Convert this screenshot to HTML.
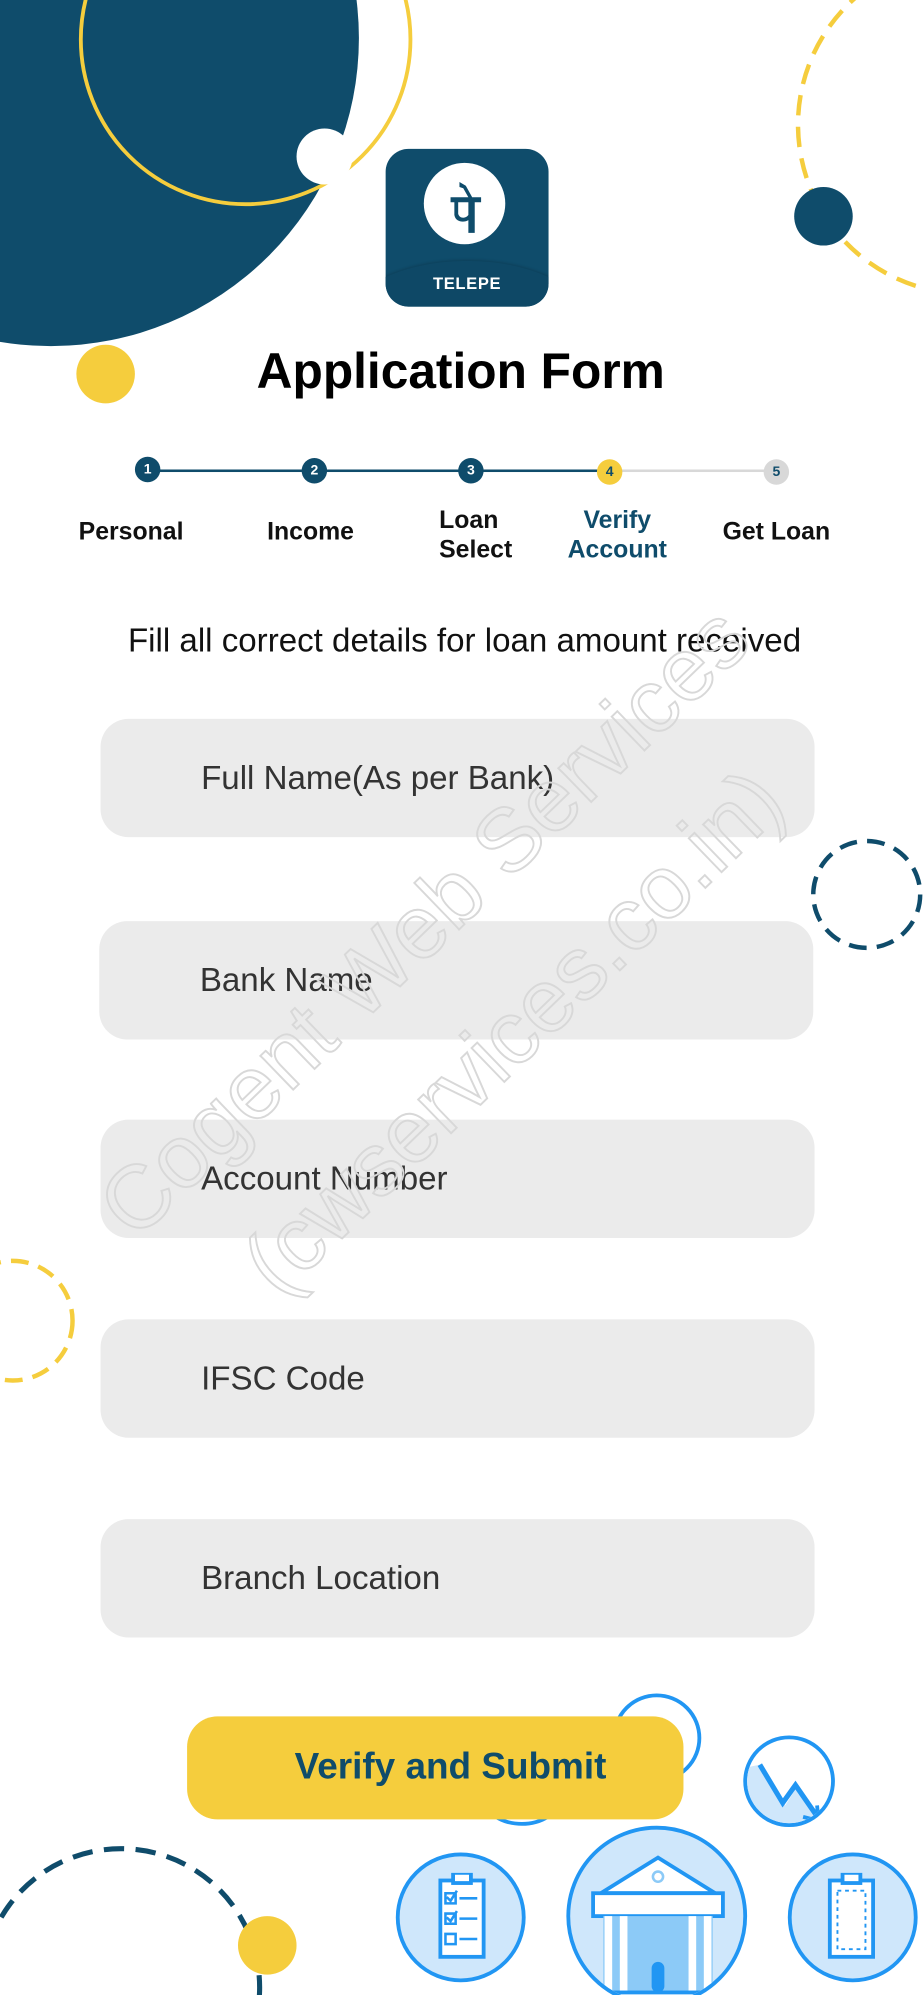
<!DOCTYPE html>
<html><head><meta charset="utf-8"><style>
html,body{margin:0;padding:0;background:#fff;overflow:hidden}
body{width:924px;height:1995px;position:relative}
#w{position:absolute;left:0;top:0;width:726px;height:1568px;transform:scale(1.27273,1.27232);transform-origin:0 0;font-family:"Liberation Sans",Arial,sans-serif;overflow:hidden}
.a{position:absolute}
.c{position:absolute;border-radius:50%}
.inp{position:absolute;left:79px;width:561px;height:93px;border-radius:22px;background:#ebebeb;font-size:26px;color:#333;line-height:93px;text-indent:79px}
.lbl{position:absolute;font-size:19.5px;font-weight:bold;color:#111;line-height:23px;text-align:center}
.dot{position:absolute;width:20px;height:20px;border-radius:50%;background:#0f4c6b;color:#fff;font-size:11px;font-weight:bold;text-align:center;line-height:20px}
.wm{position:absolute;font-size:70px;color:transparent;-webkit-text-stroke:1.5px #d8d8d8;white-space:nowrap;transform-origin:0 0}
</style></head><body><div id="w">
<div class="c" style="left:-202px;top:-212px;width:484px;height:484px;background:#0f4c6b"></div>
<div class="c" style="left:62px;top:-100px;width:256px;height:256px;border:3px solid #f5cd3d"></div>
<div class="c" style="left:233px;top:101px;width:44px;height:44px;background:#fff"></div>
<div class="c" style="left:60px;top:271px;width:46px;height:46px;background:#f5cd3d"></div>
<svg class="a" style="left:0;top:0" width="726" height="1568">
 <circle cx="760" cy="98" r="133" fill="none" stroke="#f5cd3d" stroke-width="3.5" stroke-dasharray="16 9"/>
 <circle cx="681" cy="703" r="42" fill="none" stroke="#0f4c6b" stroke-width="3.5" stroke-dasharray="14 8"/>
 <circle cx="10" cy="1038" r="47" fill="none" stroke="#f5cd3d" stroke-width="3.5" stroke-dasharray="14 8"/>
 <circle cx="95" cy="1562" r="109" fill="none" stroke="#0f4c6b" stroke-width="4" stroke-dasharray="16 9"/>
</svg>
<div class="c" style="left:624px;top:147px;width:46px;height:46px;background:#0f4c6b"></div>
<div class="a" style="left:303px;top:117px;width:128px;height:124px;border-radius:18px;background:#0f4c6b;overflow:hidden">
 <div class="c" style="left:30px;top:11px;width:64px;height:64px;background:#fff"></div>
 <svg class="a" style="left:30px;top:11px" width="64" height="64" viewBox="0 0 64 64"><path d="M21 27h24v4h-5v24h-5v-10c-3 2-10 2-11-4v-10h-3z M27 31v9c1 4 6 4 8 1v-10z M28 15l5 3 5 9h-3l-4-7-3-1z" fill="#0f4c6b" fill-rule="evenodd"/></svg>
 <div class="c" style="left:-40px;top:88px;width:208px;height:120px;background:#0e4866;box-shadow:0 -1px 2px rgba(0,0,0,.15)"></div>
 <div class="a" style="left:0;width:128px;top:98px;text-align:center;color:#fff;font-weight:bold;font-size:13px;letter-spacing:.5px">TELEPE</div>
</div>
<div class="a" style="left:0;width:724px;top:271px;text-align:center;font-size:39px;font-weight:bold;color:#000">Application Form</div>
<div class="a" style="left:116px;top:369px;width:363px;height:2px;background:#0f4c6b"></div>
<div class="a" style="left:479px;top:369px;width:131px;height:2px;background:#d8d8d8"></div>
<div class="dot" style="left:106px;top:359px">1</div>
<div class="dot" style="left:237px;top:360px">2</div>
<div class="dot" style="left:360px;top:360px">3</div>
<div class="dot" style="left:469px;top:361px;background:#f5cd3d;color:#0f4c6b">4</div>
<div class="dot" style="left:600px;top:361px;background:#d8d8d8;color:#0f4c6b">5</div>
<div class="lbl" style="left:53px;width:100px;top:407px">Personal</div>
<div class="lbl" style="left:194px;width:100px;top:407px">Income</div>
<div class="lbl" style="left:345px;top:398px;text-align:left">Loan<br>Select</div>
<div class="lbl" style="left:435px;width:100px;top:398px;color:#0f4c6b">Verify<br>Account</div>
<div class="lbl" style="left:560px;width:100px;top:407px">Get Loan</div>
<div class="a" style="left:0;width:730px;top:488px;text-align:center;font-size:26px;color:#111">Fill all correct details for loan amount received</div>
<div class="inp" style="top:565px">Full Name(As per Bank)</div>
<div class="inp" style="top:724px;left:78px">Bank Name</div>
<div class="inp" style="top:880px">Account Number</div>
<div class="inp" style="top:1037px">IFSC Code</div>
<div class="inp" style="top:1194px">Branch Location</div>
<div class="wm" style="left:62px;top:930px;transform:rotate(-44deg)">Cogent Web Services</div>
<div class="wm" style="left:175px;top:975px;transform:rotate(-44deg)">(cwservices.co.in)</div>
<div class="c" style="left:187px;top:1506px;width:46px;height:46px;background:#f5cd3d"></div>
<div class="c" style="left:481px;top:1331px;width:70px;height:70px;border:3px solid #2196f3;box-sizing:border-box;background:#fff"></div>
<div class="c" style="left:380px;top:1395px;width:60px;height:40px;border:3px solid #2196f3;box-sizing:border-box;background:#fff"></div>
<div class="c" style="left:584px;top:1364px;width:72px;height:72px;border:3px solid #2196f3;box-sizing:border-box;background:#fff;overflow:hidden">
 <svg class="a" style="left:0;top:0" width="66" height="66"><path d="M0 22L10 20 30 52 40 36 60 66 0 66z" fill="#cfe7fb"/><path d="M10 20l18 30 10-14 18 26" stroke="#2196f3" stroke-width="4" fill="none"/><path d="M56 64l-1-12M56 64l-12-3" stroke="#2196f3" stroke-width="3"/></svg>
</div>
<div class="c" style="left:311px;top:1456px;width:102px;height:102px;border:3px solid #2196f3;box-sizing:border-box;background:#cfe7fb">
 <svg class="a" style="left:30px;top:13px" width="40" height="72"><rect x="2" y="6" width="34" height="60" fill="#fff" stroke="#2196f3" stroke-width="3"/><rect x="12" y="0" width="14" height="8" fill="#fff" stroke="#2196f3" stroke-width="3"/><path d="M6 16h8v8h-8zM6 32h8v8h-8zM6 48h8v8h-8zM17 20h14M17 36h14M17 52h14M7 19l3 3 5-8M7 35l3 3 5-8" stroke="#2196f3" stroke-width="2" fill="none"/></svg>
</div>
<div class="c" style="left:445px;top:1435px;width:142px;height:142px;border:3px solid #2196f3;box-sizing:border-box;background:#cfe7fb;overflow:hidden">
 <svg class="a" style="left:12px;top:20px" width="114" height="120"><path d="M12 30L57 2 102 30z" fill="#fff" stroke="#2196f3" stroke-width="3"/><circle cx="57" cy="17" r="4" fill="none" stroke="#8ccaf7" stroke-width="2"/><rect x="6" y="30" width="102" height="18" fill="#fff" stroke="#2196f3" stroke-width="3"/><rect x="14" y="48" width="86" height="60" fill="#8ccaf7"/><path d="M18 48v60M30 48v60M84 48v60M96 48v60" stroke="#fff" stroke-width="6"/><rect x="52" y="84" width="10" height="24" rx="5" fill="#2196f3"/><rect x="6" y="108" width="102" height="8" fill="#fff" stroke="#2196f3" stroke-width="3"/></svg>
</div>
<div class="c" style="left:619px;top:1456px;width:102px;height:102px;border:3px solid #2196f3;box-sizing:border-box;background:#cfe7fb">
 <svg class="a" style="left:28px;top:13px" width="40" height="72"><rect x="2" y="6" width="34" height="60" fill="#fff" stroke="#2196f3" stroke-width="3"/><rect x="12" y="0" width="14" height="8" fill="#fff" stroke="#2196f3" stroke-width="3"/><rect x="8" y="14" width="22" height="46" fill="none" stroke="#2196f3" stroke-width="1.5" stroke-dasharray="3 3"/></svg>
</div>
<div class="a" style="left:147px;top:1349px;width:390px;height:81px;border-radius:24px;background:#f5cd3d;color:#0f4c6b;font-weight:bold;font-size:29px;line-height:81px;text-align:center;text-indent:24px">Verify and Submit</div>
</div></body></html>
